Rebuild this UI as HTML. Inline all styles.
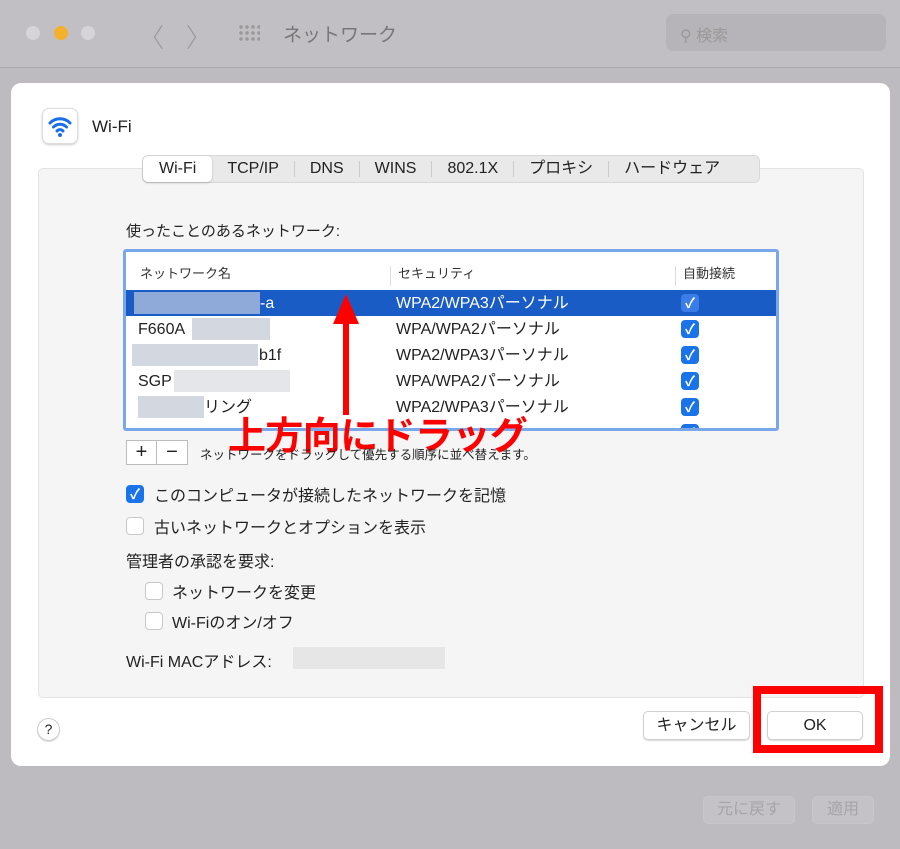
<!DOCTYPE html>
<html><head><meta charset="utf-8"><style>
*{box-sizing:border-box;margin:0;padding:0}
body{width:900px;height:849px;overflow:hidden;background:#bdbbbf;font-family:"Liberation Sans","Noto Sans CJK JP",sans-serif;color:#222;position:relative}
.a{position:absolute}
.tb{left:0;top:0;width:900px;height:68px;background:#c1bfc3;border-bottom:1px solid #aaa8ac}
.dot{width:14px;height:14px;border-radius:50%;top:26px;background:#d6d4d8}
.dlg{left:11px;top:83px;width:879px;height:683px;background:#fff;border-radius:10px}
.panel{left:38px;top:168px;width:826px;height:530px;background:#f5f5f5;border:1px solid #e3e3e3;border-radius:5px}
.tabs{left:142px;top:155px;width:618px;height:28px;background:#e9e9e9;border:1px solid #d8d8d8;border-radius:6px;display:flex;align-items:center;font-size:16px}
.tabs span{padding:0 15px;border-left:1px solid #ccc;line-height:16px}
.tabs span.s{background:#fff;border:none;border-radius:5px;line-height:26px;box-shadow:0 1px 2px rgba(0,0,0,.2);padding:0 16px}
.tbl{left:123px;top:249px;width:656px;height:182px;background:#fff;border:3px solid #7aa7ea;border-radius:3px;overflow:hidden;font-size:16px}
.row{position:absolute;left:0;width:650px;height:26px;line-height:28px}
.blur{position:absolute;background:#d3d8e0;height:22px}
.cb{position:absolute;left:555px;top:4px;width:18px;height:18px;border-radius:4px;background:#1a73e8;color:#fff;font-size:14px;line-height:18px;text-align:center;font-weight:bold}
.chk{width:18px;height:18px;border-radius:4px;border:1px solid #c8c8c8;background:#fff}
.btn{background:#fff;border:1px solid #d0d0d0;border-radius:5px;box-shadow:0 1px 1px rgba(0,0,0,.15);text-align:center;font-size:16px}
</style></head><body>
<div class="a tb"></div>
<div class="a dot" style="left:26px"></div><div class="a dot" style="left:54px;background:#f4b12e"></div><div class="a dot" style="left:81px"></div>
<div class="a" style="left:138px;top:18px;font-size:26px;color:#999;font-weight:300">〈</div>
<div class="a" style="left:186px;top:18px;font-size:26px;color:#999;font-weight:300">〉</div>
<div class="a" style="left:238px;top:24px;width:22px;height:18px;background:radial-gradient(circle,#999 1.6px,transparent 2px) 0 0/6px 6px"></div>
<div class="a" style="left:283px;top:20px;font-size:19px;color:#777">ネットワーク</div>
<div class="a" style="left:666px;top:14px;width:220px;height:37px;background:#b6b4b8;border-radius:7px"></div>
<div class="a" style="left:680px;top:22px;font-size:16px;color:#999">⚲ 検索</div>
<div class="a dlg"></div>
<div class="a" style="left:42px;top:108px;width:36px;height:36px;border:1px solid #ddd;border-radius:7px;background:#fff;box-shadow:0 1px 2px rgba(0,0,0,.2)">
<svg width="34" height="34" viewBox="0 0 34 34"><path d="M7 14a14 14 0 0 1 20 0M10.5 18a9 9 0 0 1 13 0M14 22a4 4 0 0 1 6 0" stroke="#1a6fe8" stroke-width="3" fill="none" stroke-linecap="round"/><circle cx="17" cy="26" r="2" fill="#1a6fe8"/></svg></div>
<div class="a" style="left:92px;top:117px;font-size:17px">Wi-Fi</div>
<div class="a panel"></div>
<div class="a tabs"><span class="s">Wi-Fi</span><span style="border:none">TCP/IP</span><span>DNS</span><span>WINS</span><span>802.1X</span><span>プロキシ</span><span>ハードウェア</span></div>
<div class="a" style="left:126px;top:220px;font-size:15px">使ったことのあるネットワーク:</div>
<div class="a tbl">
<div class="row" style="top:6px;height:30px;font-size:13px;color:#333;line-height:32px"><span class="a" style="left:14px">ネットワーク名</span><span class="a" style="left:264px;top:8px;height:20px;border-left:1px solid #ddd"></span><span class="a" style="left:272px">セキュリティ</span><span class="a" style="left:549px;top:8px;height:20px;border-left:1px solid #ddd"></span><span class="a" style="left:557px">自動接続</span></div>
<div class="row" style="top:38px;background:#1a5cc6;color:#fff"><div class="blur" style="left:8px;top:2px;width:126px;background:#8fa9d9"></div><span class="a" style="left:134px">-a</span><span class="a" style="left:270px">WPA2/WPA3パーソナル</span><div class="cb" style="background:#3a7de8">✓</div></div>
<div class="row" style="top:64px"><span class="a" style="left:12px">F660A</span><div class="blur" style="left:66px;top:2px;width:78px"></div><span class="a" style="left:270px">WPA/WPA2パーソナル</span><div class="cb">✓</div></div>
<div class="row" style="top:90px"><div class="blur" style="left:6px;top:2px;width:126px"></div><span class="a" style="left:133px">b1f</span><span class="a" style="left:270px">WPA2/WPA3パーソナル</span><div class="cb">✓</div></div>
<div class="row" style="top:116px"><span class="a" style="left:12px">SGP</span><div class="blur" style="left:48px;top:2px;width:116px;background:#e4e6ea"></div><span class="a" style="left:270px">WPA/WPA2パーソナル</span><div class="cb">✓</div></div>
<div class="row" style="top:142px"><div class="blur" style="left:12px;top:2px;width:66px"></div><span class="a" style="left:78px">リング</span><span class="a" style="left:270px">WPA2/WPA3パーソナル</span><div class="cb">✓</div></div>
<div class="row" style="top:168px"><div class="cb">✓</div></div>
</div>
<svg class="a" style="left:326px;top:292px" width="40" height="125"><path d="M20 2 L33 32 L23 32 L23 123 L17 123 L17 32 L7 32Z" fill="#f00"/></svg>
<div class="a" style="left:228px;top:405px;font-size:38px;font-weight:bold;color:#f00;letter-spacing:-0.6px">上方向にドラッグ</div>
<div class="a" style="left:126px;top:440px;width:62px;height:25px;border:1px solid #bbb;background:#fff;display:flex;font-size:20px;line-height:23px"><span style="width:30px;text-align:center;border-right:1px solid #bbb">+</span><span style="width:30px;text-align:center">−</span></div>
<div class="a" style="left:200px;top:444px;font-size:12.5px">ネットワークをドラッグして優先する順序に並べ替えます。</div>
<div class="a chk" style="left:126px;top:485px;background:#1a73e8;border-color:#1a73e8;color:#fff;font-size:14px;text-align:center;line-height:16px;font-weight:bold">✓</div>
<div class="a" style="left:154px;top:482px;font-size:16px">このコンピュータが接続したネットワークを記憶</div>
<div class="a chk" style="left:126px;top:517px"></div>
<div class="a" style="left:154px;top:514px;font-size:16px">古いネットワークとオプションを表示</div>
<div class="a" style="left:126px;top:548px;font-size:16px">管理者の承認を要求:</div>
<div class="a chk" style="left:145px;top:582px"></div>
<div class="a" style="left:172px;top:579px;font-size:16px">ネットワークを変更</div>
<div class="a chk" style="left:145px;top:612px"></div>
<div class="a" style="left:172px;top:609px;font-size:16px">Wi-Fiのオン/オフ</div>
<div class="a" style="left:126px;top:648px;font-size:16px">Wi-Fi MACアドレス:</div>
<div class="a" style="left:293px;top:647px;width:152px;height:22px;background:#e6e6e6"></div>
<div class="a" style="left:37px;top:718px;width:23px;height:23px;border-radius:50%;border:1px solid #ccc;background:#fff;text-align:center;font-size:14px;line-height:21px;box-shadow:0 1px 1px rgba(0,0,0,.15)">?</div>
<div class="a btn" style="left:643px;top:711px;width:107px;height:29px;line-height:27px">キャンセル</div>
<div class="a btn" style="left:767px;top:711px;width:96px;height:29px;line-height:27px">OK</div>
<div class="a" style="left:753px;top:686px;width:130px;height:67px;border:8px solid #f00"></div>
<div class="a" style="left:703px;top:796px;width:92px;height:28px;border:1px solid #c8c6ca;border-radius:5px;background:#c4c2c6;color:#a6a4a8;text-align:center;line-height:26px;font-size:16px">元に戻す</div>
<div class="a" style="left:812px;top:796px;width:62px;height:28px;border:1px solid #c8c6ca;border-radius:5px;background:#c4c2c6;color:#a6a4a8;text-align:center;line-height:26px;font-size:16px">適用</div>
</body></html>
